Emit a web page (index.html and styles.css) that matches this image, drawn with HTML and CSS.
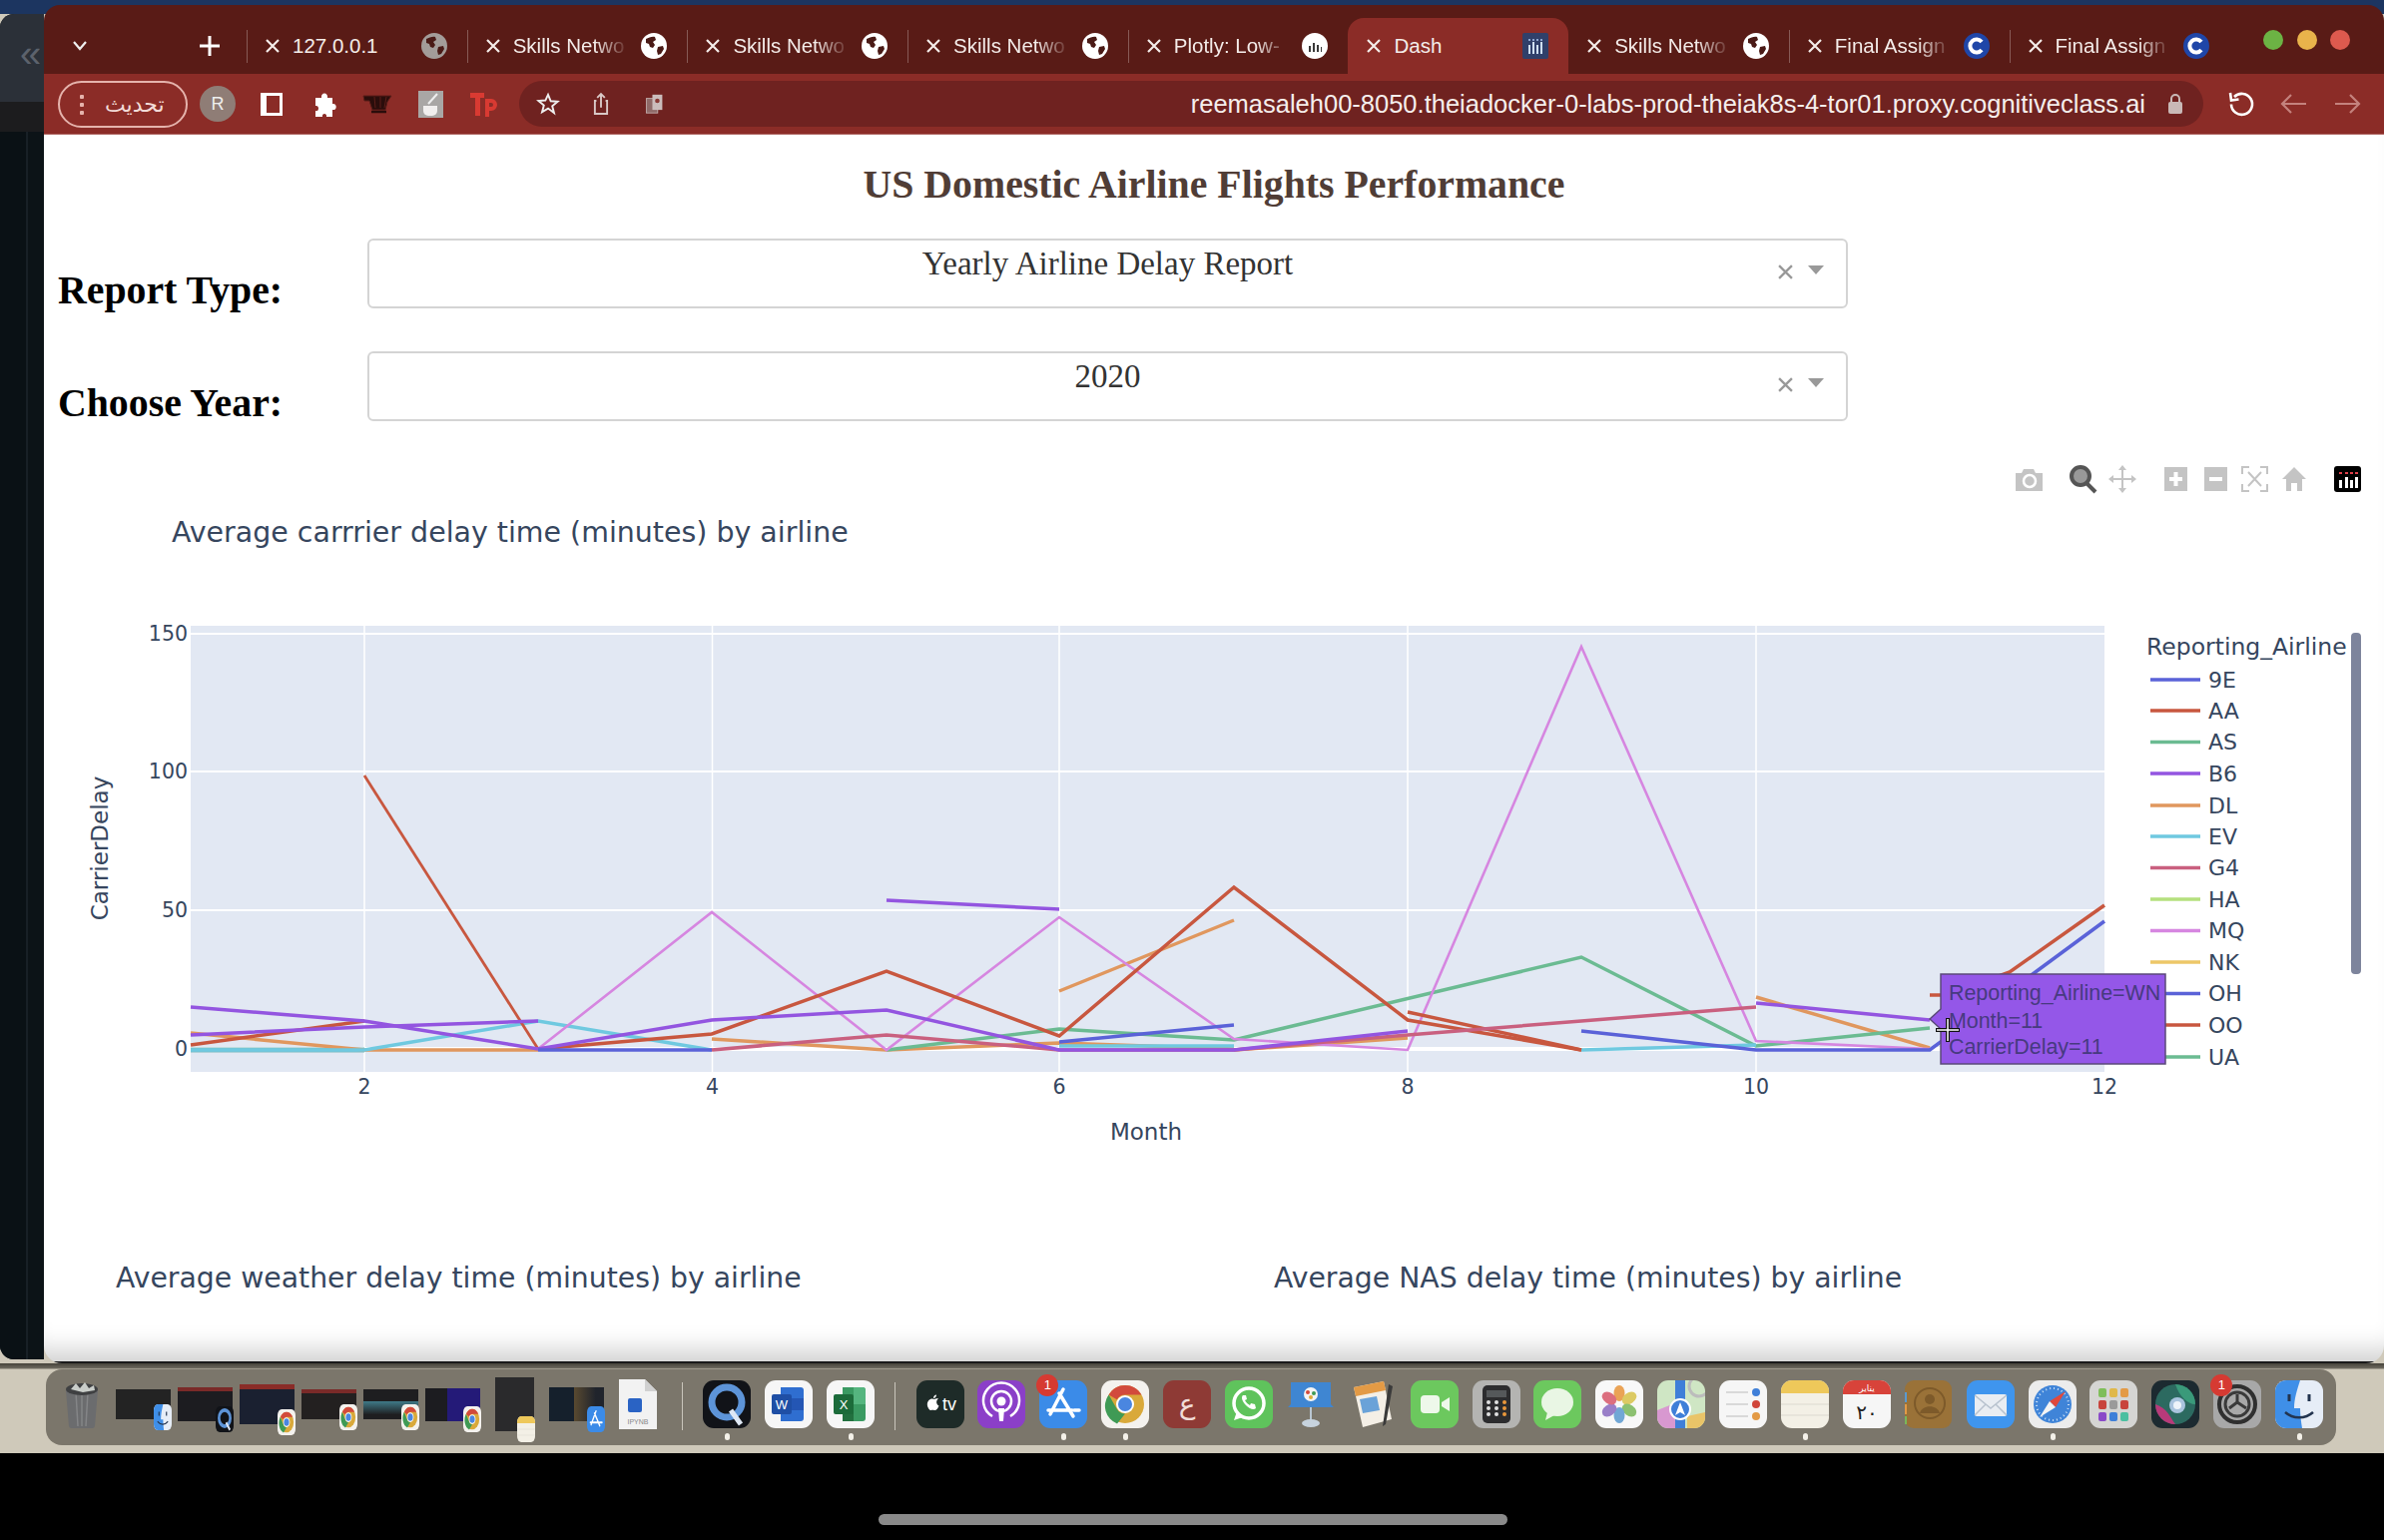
FILE: index.html
```html
<!DOCTYPE html>
<html lang="en">
<head>
    <meta charset="UTF-8">
    <title>Dash</title>
    <link rel="stylesheet" href="styles.css">
</head>
<body>
    <!-- shared icons -->
    <svg class="defs" width="0" height="0">
        <symbol id="i-x" viewBox="0 0 14 14"><path d="M1 1l12 12M13 1L1 13" stroke="currentColor" stroke-width="2.200" fill="none"/></symbol>
        <symbol id="i-globe" viewBox="0 0 28 28"><circle cx="14" cy="14" r="13" fill="currentColor"/><path d="M6 7c3-1 6-3 9-2l1 3-3 2 2 3-2 3-3-1-1-3-3-1zM18 15l5-1 1 3-3 5-3 1-1-4z" fill="#4a1a16"/></symbol>
        <symbol id="i-plotly" viewBox="0 0 28 28"><circle cx="14" cy="14" r="13" fill="#fff"/><path d="M8 14h2v6H8zM12 11h2v9h-2zM16 13h2v7h-2zM20 15h1v5h-1z" fill="#3a3a3a"/></symbol>
        <symbol id="i-dash" viewBox="0 0 28 28"><rect x="1" y="1" width="26" height="26" rx="2" fill="#30406a"/><path d="M7 13h2v9H7zM11 10h2v12h-2zM15 13h2v9h-2zM19 10h2v12h-2z" fill="#cfe0f5"/><path d="M7 7h2v2H7zM11 7h2v2h-2zM15 7h2v2h-2zM19 7h2v2h-2z" fill="#8fa6d0"/></symbol>
        <symbol id="i-c" viewBox="0 0 28 28"><circle cx="14" cy="14" r="13" fill="#1f46a8"/><path d="M19 10a6.500 6.500 0 1 0 0 8" stroke="#fff" stroke-width="4" fill="none"/></symbol>
        <symbol id="i-chrome" viewBox="0 0 48 48" preserveAspectRatio="none"><rect x="0" y="0" width="48" height="48" rx="11" fill="#f4f2ee"/><circle cx="24" cy="24" r="19" fill="#d9a93a"/><path d="M24 5a19 19 0 0 1 16.500 9.500H24a9.500 9.500 0 0 0-8.200 4.700L7.600 14.500A19 19 0 0 1 24 5z" fill="#d24a3c"/><path d="M7.600 14.500l8.200 14.200a9.500 9.500 0 0 0 8.200 4.800l-8 10A19 19 0 0 1 7.600 14.500z" fill="#3f9a55"/><circle cx="24" cy="24" r="9" fill="#fff"/><circle cx="24" cy="24" r="7" fill="#4a86e0"/></symbol>
        <symbol id="i-finder" viewBox="0 0 48 48" preserveAspectRatio="none"><rect width="48" height="48" rx="11" fill="#e6edf7"/><path d="M11 0h14c-3 9-6 19-6 28h6c0 7 1 14 2 20H11A11 11 0 0 1 0 37V11A11 11 0 0 1 11 0z" fill="#3f8fe8"/><path d="M14 14v7M34 14v7" stroke="#22344f" stroke-width="3"/><path d="M10 32c8 7 20 7 28 0" stroke="#22344f" stroke-width="2.500" fill="none"/></symbol>
        <symbol id="i-appstore" viewBox="0 0 48 48" preserveAspectRatio="none"><rect width="48" height="48" rx="11" fill="#3b8be8"/><path d="M24 9l-13 25M20 13l14 23M9 30h24M35 30h5" stroke="#fff" stroke-width="3.500" fill="none" stroke-linecap="round"/></symbol>
        <symbol id="i-notes" viewBox="0 0 48 48" preserveAspectRatio="none"><rect width="48" height="48" rx="11" fill="#f3f0e6"/><path d="M0 13V11A11 11 0 0 1 11 0h26a11 11 0 0 1 11 11v2z" fill="#eec85a"/><path d="M0 24h48M0 35h48" stroke="#dcd9d0" stroke-width="1"/></symbol>
        <symbol id="i-quicktime" viewBox="0 0 48 48" preserveAspectRatio="none"><rect width="48" height="48" rx="11" fill="#111318"/><circle cx="24" cy="22" r="15" fill="none" stroke="#5d94d8" stroke-width="7"/><path d="M28 30l10 14" stroke="#dfe8f5" stroke-width="5"/></symbol>
    </svg>

    <div class="desktop">
        <div class="back-window">
            <div class="back-top">&laquo;</div>
            <div class="back-bar"></div>
            <div class="back-body"></div>
        </div>

        <div class="browser">
            <div class="tabstrip">
                <div class="strip-controls">
                    <svg class="chevron" width="18" height="12" viewBox="0 0 18 12"><path d="M3 2l6 7 6-7" stroke="#eee" stroke-width="2.200" fill="none"/></svg>
                    <svg class="new-tab" width="24" height="24" viewBox="0 0 24 24"><path d="M12 2v20M2 12h20" stroke="#fff" stroke-width="3"/></svg>
                </div>
                <div class="tab"><svg class="tab-x"><use href="#i-x"/></svg><span class="tab-label plain">127.0.0.1</span><svg class="fav dim"><use href="#i-globe"/></svg></div>
                <div class="tab"><svg class="tab-x"><use href="#i-x"/></svg><span class="tab-label">Skills Netwo</span><svg class="fav"><use href="#i-globe"/></svg></div>
                <div class="tab"><svg class="tab-x"><use href="#i-x"/></svg><span class="tab-label">Skills Netwo</span><svg class="fav"><use href="#i-globe"/></svg></div>
                <div class="tab"><svg class="tab-x"><use href="#i-x"/></svg><span class="tab-label">Skills Netwo</span><svg class="fav"><use href="#i-globe"/></svg></div>
                <div class="tab"><svg class="tab-x"><use href="#i-x"/></svg><span class="tab-label">Plotly: Low-</span><svg class="fav"><use href="#i-plotly"/></svg></div>
                <div class="tab active"><svg class="tab-x"><use href="#i-x"/></svg><span class="tab-label plain">Dash</span><svg class="fav"><use href="#i-dash"/></svg></div>
                <div class="tab"><svg class="tab-x"><use href="#i-x"/></svg><span class="tab-label">Skills Netwo</span><svg class="fav"><use href="#i-globe"/></svg></div>
                <div class="tab"><svg class="tab-x"><use href="#i-x"/></svg><span class="tab-label">Final Assign</span><svg class="fav"><use href="#i-c"/></svg></div>
                <div class="tab"><svg class="tab-x"><use href="#i-x"/></svg><span class="tab-label">Final Assign</span><svg class="fav"><use href="#i-c"/></svg></div>
                <div class="traffic">
                    <span class="light green"></span>
                    <span class="light yellow"></span>
                    <span class="light red"></span>
                </div>
            </div>

            <div class="toolbar">
                <div class="update-pill"><span class="pill-dots"></span><span class="pill-text">تحديث</span></div>
                <div class="avatar">R</div>
                <svg class="tool-icon" viewBox="0 0 34 34"><rect x="6" y="6" width="22" height="23" fill="#fff"/><rect x="12" y="9" width="13" height="17" fill="#8a2b26"/></svg>
                <svg class="tool-icon" viewBox="0 0 34 34"><path d="M8 11h6c-1-6 7-6 6 0h5v6c5-1 5 7 0 6v7h-6c1-4-5-4-4 0H8v-6c4 1 4-6 0-5z" fill="#fff"/></svg>
                <svg class="tool-icon" viewBox="0 0 34 34"><path d="M3 9h28l-4 6-2 8H12L9 14H4zM14 10l1 11M20 10v11M26 10l-2 11" fill="#2a0d0b" stroke="#5a1d18" stroke-width="1"/><path d="M11 25h15" stroke="#2a0d0b" stroke-width="2.500"/></svg>
                <svg class="tool-icon" viewBox="0 0 34 34"><rect x="5" y="4" width="25" height="27" fill="#a9a7a5"/><path d="M10 19h14v5a5 5 0 0 1-5 5h-4a5 5 0 0 1-5-5z" fill="#f1efee"/><path d="M15 17l9-10" stroke="#eee" stroke-width="2"/></svg>
                <svg class="tool-icon" viewBox="0 0 34 34"><path d="M4 6h14v5h-4v18H9V11H4zM19 12h6a6 6 0 0 1 0 12h-2v6h-4zM23 16v4h2a2 2 0 0 0 0-4z" fill="#d93a32"/></svg>
                <div class="omnibox">
                    <svg class="tool-icon" viewBox="0 0 34 34"><path d="M17 5l3.500 8.500 9 .7-7 5.800 2.300 8.800L17 23l-7.800 4.800 2.300-8.800-7-5.800 9-.7z" fill="none" stroke="#eee" stroke-width="2.500"/></svg>
                    <svg class="tool-icon" viewBox="0 0 34 34"><path d="M11 13H9v17h16V13h-2M17 22V5M12 9l5-5 5 5" fill="none" stroke="#d9c8c6" stroke-width="2.500"/></svg>
                    <svg class="tool-icon" viewBox="0 0 34 34"><rect x="7" y="10" width="15" height="19" fill="#8f6a68" stroke="#cbbcbb"/><rect x="15" y="5" width="13" height="20" fill="#cbbcbb"/><circle cx="21.500" cy="13" r="3" fill="#8a3a36"/></svg>
                    <span class="url">reemasaleh00-8050.theiadocker-0-labs-prod-theiak8s-4-tor01.proxy.cognitiveclass.ai</span>
                    <svg class="lock" width="16" height="22" viewBox="0 0 16 22"><rect x="1" y="9" width="14" height="12" rx="2" fill="#c9b9b7"/><path d="M4 9V6a4 4 0 0 1 8 0v3" stroke="#c9b9b7" stroke-width="2" fill="none"/></svg>
                </div>
                <svg class="tool-icon reload" viewBox="0 0 34 34"><path d="M10 10a10.500 10.500 0 1 1-3 7.500" fill="none" stroke="#fff" stroke-width="2.600"/><path d="M6 6l1 7.500 7.500-1" fill="none" stroke="#fff" stroke-width="2.600"/></svg>
                <svg class="tool-icon" viewBox="0 0 34 34"><path d="M29 17H6M14 8l-9 9 9 9" fill="none" stroke="#c4827d" stroke-width="2.200"/></svg>
                <svg class="tool-icon" viewBox="0 0 34 34"><path d="M5 17h23M20 8l9 9-9 9" fill="none" stroke="#c4827d" stroke-width="2.200"/></svg>
            </div>

            <div class="page">
                <h1 class="page-title">US Domestic Airline Flights Performance</h1>

                <div class="control-row">
                    <label class="control-label">Report Type:</label>
                    <div class="dropdown">
                        <span class="dropdown-value">Yearly Airline Delay Report</span>
                        <svg class="dropdown-clear"><use href="#i-x"/></svg>
                        <span class="dropdown-arrow"></span>
                    </div>
                </div>
                <div class="control-row">
                    <label class="control-label">Choose Year:</label>
                    <div class="dropdown">
                        <span class="dropdown-value">2020</span>
                        <svg class="dropdown-clear"><use href="#i-x"/></svg>
                        <span class="dropdown-arrow"></span>
                    </div>
                </div>

                <!-- viewBox uses screen coordinates so points read straight off the plot -->
                <svg class="chart" viewBox="44 450 2344 760" width="2344" height="760">
                    <g class="modebar">
                        <path class="mb-light" d="M2019 474h6l2-4h10l2 4h7v18h-27z"/>
                        <circle cx="2033" cy="482" r="6" fill="none" stroke="#fff" stroke-width="2.500"/>
                        <circle cx="2084" cy="477" r="9" fill="#999" stroke="#555" stroke-width="4"/>
                        <path d="M2090 484l9 9" stroke="#555" stroke-width="4"/>
                        <path class="mb-line" d="M2126 468v24M2114 480h24"/>
                        <path class="mb-light" d="M2126 466l4 5h-8zM2126 494l4-5h-8zM2112 480l5-4v8zM2140 480l-5-4v8z"/>
                        <rect class="mb-light" x="2168" y="468" width="23" height="24"/>
                        <path d="M2179.500 473v14M2173 480h13" stroke="#fff" stroke-width="4"/>
                        <rect class="mb-light" x="2208" y="468" width="23" height="24"/>
                        <path d="M2213 480h13" stroke="#fff" stroke-width="4"/>
                        <path class="mb-line" d="M2246 475v-7h7M2264 468h7v7M2271 485v7h-7M2253 492h-7v-7M2252 473l13 14M2265 473l-13 14"/>
                        <path class="mb-light" d="M2298 468l12 12h-4v12h-5v-8h-6v8h-5v-12h-4z"/>
                        <rect x="2338" y="467" width="27" height="26" rx="3" fill="#000"/>
                        <path d="M2343 481h3v8h-3zM2349 478h3v11h-3zM2354 481h3v8h-3zM2359 478h3v11h-3z" fill="#fff"/>
                        <path d="M2343 473h3v2h-3zM2349 473h3v2h-3zM2354 473h3v2h-3zM2359 473h3v2h-3z" fill="#e0404a"/>
                    </g>

                    <text class="chart-title" x="172" y="543">Average carrrier delay time (minutes) by airline</text>

                    <rect class="plot-bg" x="191" y="627" width="1917" height="447"/>
                    <g class="grid">
                        <path d="M365 627v447M713.500 627v447M1061 627v447M1410 627v447M1759 627v447"/>
                        <path class="grid-h" d="M191 635h1917M191 773h1917M191 912h1917"/>
                        <path class="grid-zero" d="M191 1051h1917"/>
                    </g>

                    <g class="ticks">
                        <text class="tick-y" x="188" y="642">150</text>
                        <text class="tick-y" x="188" y="780">100</text>
                        <text class="tick-y" x="188" y="919">50</text>
                        <text class="tick-y" x="188" y="1058">0</text>
                        <text class="tick-x" x="365" y="1096">2</text>
                        <text class="tick-x" x="713.500" y="1096">4</text>
                        <text class="tick-x" x="1061" y="1096">6</text>
                        <text class="tick-x" x="1410" y="1096">8</text>
                        <text class="tick-x" x="1759" y="1096">10</text>
                        <text class="tick-x" x="2108" y="1096">12</text>
                    </g>
                    <text class="axis-title tick-x" x="1148" y="1142">Month</text>
                    <text class="axis-title tick-x" transform="translate(108 850) rotate(-90)">CarrierDelay</text>

                    <g class="lines">
                        <polyline class="s-teal" points="191,1052 365,1052"/>
                        <polyline class="s-dl" points="191,1035 365,1052 539,1052"/>
                        <polyline class="s-dl" points="713,1041 888,1052 1061,1045 1236,1051"/>
                        <polyline class="s-dl" points="1061,993 1236,922"/>
                        <polyline class="s-dl" points="1236,1052 1410,1040"/>
                        <polyline class="s-dl" points="1759,999 1933,1050"/>
                        <polyline class="s-as" points="888,1052 1061,1031 1236,1042 1584,959 1759,1048 1933,1030"/>
                        <polyline class="s-ev" points="191,1052 365,1052 539,1023 713,1052"/>
                        <polyline class="s-ev" points="1061,1048 1236,1048"/>
                        <polyline class="s-ev" points="1584,1052 1759,1047"/>
                        <polyline class="s-mq" points="539,1051 713,914 888,1052 1061,919 1236,1041 1410,1052 1584,648 1759,1043 1933,1051"/>
                        <polyline class="s-aa" points="191,1047 365,1023"/>
                        <polyline class="s-aa thin" points="365,777 539,1051"/>
                        <polyline class="s-aa" points="539,1051 713,1036 888,973 1061,1038 1236,889 1410,1022 1584,1052"/>
                        <polyline class="s-aa" points="1410,1014 1584,1052"/>
                        <polyline class="s-aa" points="1933,997 1950,997 2013,974 2108,907"/>
                        <polyline class="s-g4" points="713,1052 888,1037 1061,1052 1236,1052 1410,1037 1584,1023 1759,1009"/>
                        <polyline class="s-b6" points="191,1009 365,1023 539,1051 713,1022 888,1012 1061,1052 1236,1052 1410,1033"/>
                        <polyline class="s-b6" points="191,1037 365,1029 539,1023"/>
                        <polyline class="s-b6" points="888,902 1061,911"/>
                        <polyline class="s-b6" points="1759,1005 1933,1022"/>
                        <polyline class="s-9e" points="539,1052 713,1052"/>
                        <polyline class="s-9e" points="1061,1044 1236,1027"/>
                        <polyline class="s-9e" points="1584,1033 1759,1052 1933,1052 2108,923"/>
                    </g>

                    <text class="legend-title" x="2150" y="656">Reporting_Airline</text>
                    <g class="legend">
                        <path class="s-9e" d="M2154 681h50"/><text x="2212" y="689">9E</text>
                        <path class="s-aa" d="M2154 712h50"/><text x="2212" y="720">AA</text>
                        <path class="s-as" d="M2154 743.500h50"/><text x="2212" y="751">AS</text>
                        <path class="s-b6" d="M2154 775h50"/><text x="2212" y="783">B6</text>
                        <path class="s-dl" d="M2154 807h50"/><text x="2212" y="815">DL</text>
                        <path class="s-ev" d="M2154 838h50"/><text x="2212" y="846">EV</text>
                        <path class="s-g4" d="M2154 869.500h50"/><text x="2212" y="877">G4</text>
                        <path class="s-ha" d="M2154 901h50"/><text x="2212" y="909">HA</text>
                        <path class="s-mq" d="M2154 932.500h50"/><text x="2212" y="940">MQ</text>
                        <path class="s-nk" d="M2154 964h50"/><text x="2212" y="972">NK</text>
                        <path class="s-9e" d="M2154 995.500h50"/><text x="2212" y="1003">OH</text>
                        <path class="s-aa" d="M2154 1027h50"/><text x="2212" y="1035">OO</text>
                        <path class="s-as" d="M2154 1059h50"/><text x="2212" y="1067">UA</text>
                    </g>
                    <rect class="legend-scroll" x="2355" y="634" width="10" height="342" rx="4"/>

                    <g class="hover">
                        <polygon points="1933,1021 1944,1011 1944,976 2169,976 2169,1066 1944,1066 1944,1031"/>
                        <text x="1952" y="1002">Reporting_Airline=WN</text>
                        <text x="1952" y="1030">Month=11</text>
                        <text x="1952" y="1056">CarrierDelay=11</text>
                    </g>
                    <path d="M1951 1020v24M1939 1032h24" stroke="#111" stroke-width="4"/>
                    <path d="M1951 1021v22M1940 1032h22" stroke="#fff" stroke-width="1.500"/>
                </svg>

                <div class="chart-row">
                    <div class="chart-heading">Average weather delay time (minutes) by airline</div>
                    <div class="chart-heading">Average NAS delay time (minutes) by airline</div>
                </div>
            </div>
        </div>
    </div>

    <div class="dock-area">
    <div class="dock">
        <div class="dock-item">
            <svg class="dock-icon" viewBox="0 0 48 48"><path d="M8 10h32l-3 36a3 3 0 0 1-3 2H14a3 3 0 0 1-3-2z" fill="#6b6c6e"/><path d="M18 12l2 34M30 12l-2 34M24 12v34" stroke="#848587" stroke-width="1.500"/><ellipse cx="24" cy="9" rx="16" ry="6" fill="#3f4042"/><path d="M13 9l5-6 4 5 5-6 4 6 5-3 1 5-12 2z" fill="#c9cdc9"/></svg>
        </div>
        <div class="dock-item"><div class="thumb t1"><svg class="thumb-badge"><use href="#i-finder"/></svg></div></div>
        <div class="dock-item"><div class="thumb t2"><svg class="thumb-badge"><use href="#i-quicktime"/></svg></div></div>
        <div class="dock-item"><div class="thumb t3"><svg class="thumb-badge"><use href="#i-chrome"/></svg></div></div>
        <div class="dock-item"><div class="thumb t4"><svg class="thumb-badge"><use href="#i-chrome"/></svg></div></div>
        <div class="dock-item"><div class="thumb t5"><svg class="thumb-badge"><use href="#i-chrome"/></svg></div></div>
        <div class="dock-item"><div class="thumb t6"><svg class="thumb-badge"><use href="#i-chrome"/></svg></div></div>
        <div class="dock-item"><div class="thumb t7"><svg class="thumb-badge"><use href="#i-notes"/></svg></div></div>
        <div class="dock-item"><div class="thumb t8"><svg class="thumb-badge"><use href="#i-appstore"/></svg></div></div>
        <div class="dock-item">
            <svg class="dock-icon tall" viewBox="0 0 38 50"><path d="M0 0h26l12 12v38H0z" fill="#f2f2f2"/><path d="M26 0v12h12z" fill="#d0d0d0"/><rect x="9" y="19" width="14" height="14" rx="2" fill="#2a63c4"/><text x="19" y="45" text-anchor="middle" class="doc-text">IPYNB</text></svg>
        </div>
        <div class="dock-sep"></div>
        <div class="dock-item running"><svg class="dock-icon"><use href="#i-quicktime"/></svg></div>
        <div class="dock-item">
            <svg class="dock-icon" viewBox="0 0 48 48"><rect width="48" height="48" rx="11" fill="#f6f6f6"/><path d="M16 7h20a3 3 0 0 1 3 3v28a3 3 0 0 1-3 3H16z" fill="#2f6ed0"/><path d="M16 18h23v12H16z" fill="#2456b4"/><rect x="7" y="14" width="20" height="20" rx="2" fill="#1f4fa5"/><text x="17" y="29" text-anchor="middle" class="app-letter">W</text></svg>
        </div>
        <div class="dock-item running">
            <svg class="dock-icon" viewBox="0 0 48 48"><rect width="48" height="48" rx="11" fill="#f6f6f6"/><path d="M16 7h20a3 3 0 0 1 3 3v28a3 3 0 0 1-3 3H16z" fill="#3a9a62"/><path d="M27 7h9a3 3 0 0 1 3 3v14H27z" fill="#55b57f"/><path d="M16 24h11v17H16z" fill="#22703f"/><rect x="7" y="14" width="20" height="20" rx="2" fill="#1c6b3a"/><text x="17" y="29" text-anchor="middle" class="app-letter">X</text></svg>
        </div>
        <div class="dock-sep"></div>
        <div class="dock-item">
            <svg class="dock-icon" viewBox="0 0 48 48"><rect width="48" height="48" rx="11" fill="#1e2b28"/><path d="M14 19c2-1 3 0 4 0s2-1 4-.500c-3 2-2 6 .500 7-1 3-3 5-4.500 4.500s-2-.500-3.500 0C12 30 8 22 14 19zM17 18c0-2 1.500-3.500 3-3.500 0 2-1.500 3.500-3 3.500z" fill="#fff"/><text x="33" y="30" text-anchor="middle" class="tv-text">tv</text></svg>
        </div>
        <div class="dock-item">
            <svg class="dock-icon" viewBox="0 0 48 48"><rect width="48" height="48" rx="11" fill="#8b3fc8"/><circle cx="24" cy="21" r="4.500" fill="#fff"/><path d="M21 28h6l-1 13h-4z" fill="#fff"/><circle cx="24" cy="21" r="10" fill="none" stroke="#fff" stroke-width="2.500"/><path d="M15 36a18 18 0 1 1 18 0" fill="none" stroke="#fff" stroke-width="2.500"/></svg>
        </div>
        <div class="dock-item running"><svg class="dock-icon"><use href="#i-appstore"/></svg><span class="badge">1</span></div>
        <div class="dock-item running"><svg class="dock-icon"><use href="#i-chrome"/></svg></div>
        <div class="dock-item">
            <svg class="dock-icon" viewBox="0 0 48 48"><rect width="48" height="48" rx="11" fill="#8e3a35"/><text x="24" y="33" text-anchor="middle" class="arabic-letter">ع</text></svg>
        </div>
        <div class="dock-item">
            <svg class="dock-icon" viewBox="0 0 48 48"><rect width="48" height="48" rx="11" fill="#5fc35c"/><circle cx="24" cy="23" r="15" fill="none" stroke="#fff" stroke-width="3.500"/><path d="M9 40l3-9 6 6z" fill="#fff"/><path d="M18 15c-2 2-1 6 3 10s8 5 10 3l-1-4-4-1-1 2c-2-1-4-3-5-5l2-1-1-4z" fill="#fff"/></svg>
        </div>
        <div class="dock-item">
            <svg class="dock-icon" viewBox="0 0 48 48"><path d="M23 22h2v20h-2z" fill="#b9c6d2"/><ellipse cx="24" cy="43" rx="9" ry="4" fill="#c7d3de"/><path d="M4 2h40v22l3 3H1l3-3z" fill="#3f86d2"/><circle cx="24" cy="14" r="7" fill="#f4f4f4"/><circle cx="21" cy="12" r="2" fill="#d24a3c"/><circle cx="27" cy="13" r="2" fill="#3f9a55"/><circle cx="24" cy="17" r="2" fill="#e0a93a"/></svg>
        </div>
        <div class="dock-item">
            <svg class="dock-icon" viewBox="0 0 48 48"><path d="M5 7l30-6 8 38-29 8z" fill="#f4efe6"/><path d="M5 7l30-6 2 9-30 6z" fill="#e39a45"/><path d="M11 19l17-3 3 14-17 3z" fill="#6aa2d8"/><path d="M40 4l4 2-7 38-3 2z" fill="#3a3a3a"/></svg>
        </div>
        <div class="dock-item">
            <svg class="dock-icon" viewBox="0 0 48 48"><rect width="48" height="48" rx="11" fill="#6cc85e"/><rect x="10" y="15" width="19" height="18" rx="4" fill="#eef8ea"/><path d="M31 22l8-5v14l-8-5z" fill="#eef8ea"/></svg>
        </div>
        <div class="dock-item">
            <svg class="dock-icon" viewBox="0 0 48 48"><rect width="48" height="48" rx="11" fill="#b4b4b2"/><rect x="10" y="5" width="28" height="38" rx="5" fill="#2c2c2e"/><path d="M14 10h20v7H14z" fill="#55585a"/><g fill="#e0e0e0"><circle cx="16" cy="22" r="2"/><circle cx="24" cy="22" r="2"/><circle cx="16" cy="28" r="2"/><circle cx="24" cy="28" r="2"/><circle cx="16" cy="34" r="2"/><circle cx="24" cy="34" r="2"/></g><g fill="#e8973a"><circle cx="32" cy="22" r="2"/><circle cx="32" cy="28" r="2"/><circle cx="32" cy="34" r="2"/></g></svg>
        </div>
        <div class="dock-item">
            <svg class="dock-icon" viewBox="0 0 48 48"><rect width="48" height="48" rx="11" fill="#6cc85e"/><ellipse cx="24" cy="22" rx="16" ry="14" fill="#e9f6e4"/><path d="M14 32l-2 8 9-5z" fill="#e9f6e4"/></svg>
        </div>
        <div class="dock-item">
            <svg class="dock-icon" viewBox="0 0 48 48"><rect width="48" height="48" rx="11" fill="#f8f8f8"/><g opacity=".85"><ellipse cx="24" cy="13" rx="5.500" ry="8" fill="#e8953a"/><ellipse cx="34" cy="18" rx="5.500" ry="8" transform="rotate(55 34 18)" fill="#d8c24a"/><ellipse cx="34" cy="30" rx="5.500" ry="8" transform="rotate(125 34 30)" fill="#7ab85a"/><ellipse cx="24" cy="35" rx="5.500" ry="8" fill="#5a9ad0"/><ellipse cx="14" cy="30" rx="5.500" ry="8" transform="rotate(55 14 30)" fill="#8a6ac0"/><ellipse cx="14" cy="18" rx="5.500" ry="8" transform="rotate(125 14 18)" fill="#d8586a"/></g></svg>
        </div>
        <div class="dock-item">
            <svg class="dock-icon" viewBox="0 0 48 48"><rect width="48" height="48" rx="11" fill="#cfe6c4"/><path d="M0 30l20-8v26H11A11 11 0 0 1 0 37z" fill="#d898d0"/><path d="M30 36l18-4v5a11 11 0 0 1-11 11h-7z" fill="#e9c468"/><path d="M18 0h10v48H18z" fill="#3f7fd8"/><circle cx="23" cy="29" r="10" fill="#3f7fd8" stroke="#fff" stroke-width="2"/><path d="M23 22l-5 13 5-3 5 3z" fill="#fff"/><circle cx="42" cy="6" r="10" fill="none" stroke="#bcbcbc" stroke-width="3"/></svg>
        </div>
        <div class="dock-item">
            <svg class="dock-icon" viewBox="0 0 48 48"><rect width="48" height="48" rx="11" fill="#f6f6f6"/><path d="M7 12h22M7 24h22M7 36h22" stroke="#cfcfcf" stroke-width="1.500"/><circle cx="37" cy="12" r="4" fill="#3f7fd8"/><circle cx="37" cy="24" r="4" fill="#d0453a"/><circle cx="37" cy="36" r="4" fill="#e39a45"/></svg>
        </div>
        <div class="dock-item running"><svg class="dock-icon"><use href="#i-notes"/></svg></div>
        <div class="dock-item">
            <svg class="dock-icon" viewBox="0 0 48 48"><rect width="48" height="48" rx="11" fill="#f6f6f6"/><path d="M0 14V11A11 11 0 0 1 11 0h26a11 11 0 0 1 11 11v3z" fill="#d8433a"/><text x="24" y="11" text-anchor="middle" class="cal-month">يناير</text><text x="24" y="39" text-anchor="middle" class="cal-day">٢٠</text></svg>
        </div>
        <div class="dock-item">
            <svg class="dock-icon" viewBox="0 0 48 48"><rect x="0" y="0" width="47" height="48" rx="9" fill="#9a7238"/><rect x="0" y="12" width="2" height="10" fill="#5a9ad0"/><rect x="0" y="24" width="2" height="10" fill="#e39a45"/><rect x="0" y="36" width="2" height="8" fill="#7ab85a"/><circle cx="25" cy="23" r="15" fill="none" stroke="#7d5a2a" stroke-width="2"/><circle cx="25" cy="19" r="5" fill="#7d5a2a"/><path d="M15 33c2-9 18-9 20 0z" fill="#7d5a2a"/></svg>
        </div>
        <div class="dock-item">
            <svg class="dock-icon" viewBox="0 0 48 48"><rect width="48" height="48" rx="11" fill="#3f95ee"/><rect x="8" y="14" width="32" height="22" rx="2" fill="#e9edf2"/><path d="M8 15l16 13 16-13M8 35l11-11M40 35L29 24" fill="none" stroke="#b8c2ce" stroke-width="1.500"/></svg>
        </div>
        <div class="dock-item running">
            <svg class="dock-icon" viewBox="0 0 48 48"><rect width="48" height="48" rx="11" fill="#ececec"/><circle cx="24" cy="24" r="19" fill="#3f84d8"/><circle cx="24" cy="24" r="16" fill="none" stroke="#cfe2f6" stroke-width="2" stroke-dasharray="1 3"/><path d="M37 11L21 21l6 6z" fill="#e0483c"/><path d="M11 37l16-10-6-6z" fill="#f4f4f4"/></svg>
        </div>
        <div class="dock-item">
            <svg class="dock-icon" viewBox="0 0 48 48"><rect width="48" height="48" rx="11" fill="#d5d5d3"/><g><rect x="9" y="8" width="8" height="9" rx="2" fill="#7fbe5a"/><rect x="20" y="8" width="8" height="9" rx="2" fill="#e0b84a"/><rect x="31" y="8" width="8" height="9" rx="2" fill="#e39a45"/><rect x="9" y="20" width="8" height="9" rx="2" fill="#c8443c"/><rect x="20" y="20" width="8" height="9" rx="2" fill="#9a9a9a"/><rect x="31" y="20" width="8" height="9" rx="2" fill="#c8443c"/><rect x="9" y="32" width="8" height="9" rx="2" fill="#8a4ac8"/><rect x="20" y="32" width="8" height="9" rx="2" fill="#3f7fd8"/><rect x="31" y="32" width="8" height="9" rx="2" fill="#4abfa0"/></g></svg>
        </div>
        <div class="dock-item">
            <svg class="dock-icon" viewBox="0 0 48 48"><rect width="48" height="48" rx="11" fill="#1c2a30"/><circle cx="24" cy="24" r="20" fill="#2c6a60"/><path d="M4 24a20 20 0 0 0 20 20c-6-8-8-16-20-20z" fill="#b83a7a"/><path d="M24 4a20 20 0 0 1 20 20c-8 0-16-8-20-20z" fill="#3a9a7a"/><circle cx="26" cy="25" r="8" fill="#a9c4de"/><circle cx="26" cy="25" r="4" fill="#eef4fa"/></svg>
        </div>
        <div class="dock-item">
            <svg class="dock-icon" viewBox="0 0 48 48"><rect width="48" height="48" rx="11" fill="#a8a8a8"/><circle cx="24" cy="24" r="18" fill="none" stroke="#2f2f2f" stroke-width="4"/><circle cx="24" cy="24" r="12" fill="none" stroke="#3a3a3a" stroke-width="3"/><path d="M24 14v8l-8 6M24 22l9 6" stroke="#3a3a3a" stroke-width="3" fill="none"/></svg>
            <span class="badge">1</span>
        </div>
        <div class="dock-item running"><svg class="dock-icon"><use href="#i-finder"/></svg></div>
    </div>
    </div>

    <div class="home-area"><span class="home-pill"></span></div>
</body>
</html>
```

FILE: styles.css
```css
* {
    box-sizing: border-box;
}

body {
    margin: 0;
    width: 2388px;
    height: 1543px;
    overflow: hidden;
    background-color: #000;
    font-family: "Liberation Sans", Arial, sans-serif;
}

.defs {
    display: block;
    height: 0;
}

/* desktop behind the windows */
.desktop {
    display: flex;
    height: 1366px;
    background: linear-gradient(to bottom, #1c3560 0, #1c3560 14px, #cfc9ba 14px);
}

.back-window {
    width: 44px;
    height: 1348px;
    margin-top: 14px;
    display: flex;
    flex-direction: column;
    background-color: #0a1115;
    border-radius: 14px 0 0 14px;
    overflow: hidden;
}

.back-top {
    height: 88px;
    padding: 18px 0 0 20px;
    background-color: #2b3038;
    color: #5c626c;
    font-size: 38px;
    line-height: 44px;
}

.back-bar {
    height: 30px;
    background-color: #1c1c1e;
}

.back-body {
    flex: 1;
    border-left: 26px solid #0a1115;
    background: linear-gradient(to right, #182026 0, #182026 2px, #0c1317 2px);
}

.browser {
    flex: 1;
    margin-top: 5px;
    display: flex;
    flex-direction: column;
    border-radius: 16px 16px 18px 18px;
    overflow: hidden;
}

/* tab strip */
.tabstrip {
    height: 69px;
    display: flex;
    align-items: flex-end;
    background-color: #591b16;
}

.strip-controls {
    width: 203px;
    height: 56px;
    display: flex;
    align-items: center;
    padding: 0 25px 0 27px;
    justify-content: space-between;
}

.tab {
    position: relative;
    width: 220.700px;
    height: 56px;
    display: flex;
    align-items: center;
    gap: 13px;
    padding: 0 19px;
    color: #f4ece9;
    font-size: 20.500px;
}

.tab::before {
    content: "";
    position: absolute;
    left: 0;
    top: 12px;
    height: 33px;
    width: 1px;
    background-color: rgba(255, 255, 255, 0.28);
}

.tab.active {
    background-color: #8b2c27;
    border-radius: 16px 16px 0 0;
}

.tab.active::before,
.tab.active + .tab::before {
    display: none;
}

.tab-x {
    width: 14px;
    height: 14px;
    flex-shrink: 0;
    color: #f4ece9;
}

.tab-label {
    flex: 1;
    white-space: nowrap;
    -webkit-mask-image: linear-gradient(to right, #000 72%, rgba(0, 0, 0, 0.12) 98%);
    mask-image: linear-gradient(to right, #000 72%, rgba(0, 0, 0, 0.12) 98%);
}

.tab-label.plain {
    -webkit-mask-image: none;
    mask-image: none;
}

.fav {
    width: 28px;
    height: 28px;
    flex-shrink: 0;
    color: #fff;
}

.fav.dim {
    color: #a39c99;
}

.traffic {
    align-self: flex-start;
    display: flex;
    gap: 13.500px;
    margin: 25px 0 0 34px;
}

.light {
    width: 20px;
    height: 20px;
    border-radius: 50%;
}

.light.green { background-color: #6cb344; }
.light.yellow { background-color: #e9b34b; }
.light.red { background-color: #dd5a4e; }

/* toolbar */
.toolbar {
    height: 61px;
    display: flex;
    align-items: center;
    gap: 19px;
    padding-left: 14px;
    background-color: #8b2c27;
    border-bottom: 1px solid #b06a66;
}

.update-pill {
    width: 130px;
    height: 47px;
    margin-right: -7px;
    display: flex;
    align-items: center;
    padding-left: 20px;
    gap: 21px;
    border: 2px solid #e5b3ac;
    border-radius: 24px;
    color: #f3dcd8;
    font-family: "DejaVu Sans", sans-serif;
    font-size: 22px;
}

.pill-dots {
    width: 4px;
    height: 22px;
    background: radial-gradient(circle, #e5b3ac 2px, transparent 2.500px) 0 0 / 4px 8px;
}

.avatar {
    width: 36px;
    height: 36px;
    flex-shrink: 0;
    border-radius: 50%;
    background-color: #8f7d76;
    color: #eee;
    font-size: 18px;
    line-height: 36px;
    text-align: center;
}

.tool-icon {
    width: 34px;
    height: 34px;
    flex-shrink: 0;
}

.omnibox {
    width: 1687px;
    height: 46px;
    display: flex;
    align-items: center;
    gap: 19px;
    padding-left: 12px;
    background-color: #6f2220;
    border-radius: 23px;
}

.omnibox .tool-icon {
    padding: 4px;
}

.url {
    flex: 1;
    text-align: right;
    color: #f5eeec;
    font-size: 25.500px;
    white-space: nowrap;
}

.lock {
    margin: 0 20px 0 3px;
    flex-shrink: 0;
}

.reload {
    margin-left: 2px;
}

/* page */
.page {
    flex: 1;
    overflow: hidden;
    background-color: #fff;
    border-bottom: 2px solid #1a1a1a;
    box-shadow: inset 0 -30px 24px -18px rgba(0, 0, 0, 0.18);
    font-family: "Liberation Serif", "Times New Roman", serif;
}

.page-title {
    margin: 0;
    height: 104px;
    padding-top: 26px;
    text-align: center;
    color: #503d36;
    font-size: 39.800px;
    line-height: 48px;
    font-weight: bold;
}

.control-row {
    display: flex;
    align-items: flex-end;
    height: 70px;
    margin-bottom: 43px;
    padding-left: 14px;
}

.control-label {
    width: 310px;
    margin-bottom: -5px;
    font-weight: bold;
    font-size: 39.800px;
    line-height: 46px;
    color: #000;
}

.dropdown {
    position: relative;
    width: 1483px;
    height: 70px;
    padding-top: 3px;
    border: 2px solid #d4d4d4;
    border-radius: 6px;
    text-align: center;
}

.dropdown-value {
    color: #333;
    font-size: 33px;
    line-height: 40px;
}

.dropdown-clear {
    position: absolute;
    right: 53px;
    top: 24px;
    width: 15px;
    height: 15px;
    color: #999;
}

.dropdown-arrow {
    position: absolute;
    right: 22px;
    top: 25px;
    border-style: solid;
    border-width: 9px 8px 0;
    border-color: #999 transparent transparent;
}

.chart {
    display: block;
    margin-top: -15px;
    font-family: "DejaVu Sans", Verdana, sans-serif;
    fill: #36465e;
}

.chart-title {
    font-size: 28.450px;
}

.plot-bg {
    fill: #e2e8f3;
}

.grid path {
    stroke: #fff;
    stroke-width: 1.500;
    fill: none;
}

.grid .grid-h {
    stroke-width: 2;
}

.grid .grid-zero {
    stroke-width: 4;
}

.ticks text {
    font-size: 20.500px;
}

.tick-y {
    text-anchor: end;
}

.tick-x {
    text-anchor: middle;
}

.axis-title {
    font-size: 23px;
}

.lines polyline {
    fill: none;
    stroke-width: 3.500;
}

.lines .thin {
    stroke-width: 2.800;
}

.lines .s-mq {
    stroke-width: 2.600;
}

.s-9e { stroke: #5a62d8; }
.s-aa { stroke: #c8573f; }
.s-as { stroke: #6bbb92; }
.s-b6 { stroke: #9355e0; }
.s-dl { stroke: #e0975e; }
.s-ev { stroke: #6fc9e0; }
.s-g4 { stroke: #c9607f; }
.s-ha { stroke: #b5e07e; }
.s-mq { stroke: #d686e0; }
.s-nk { stroke: #edc768; }
.lines .s-teal { stroke: #7cb9c0; stroke-width: 5; }

.legend-title {
    font-size: 23.500px;
}

.legend text {
    font-size: 22px;
}

.legend path {
    stroke-width: 3.500;
    fill: none;
}

.legend-scroll {
    fill: #7d849c;
}

.hover polygon {
    fill: #9457e8;
    stroke: #5b4a7a;
    stroke-width: 1.500;
}

.hover text {
    fill: #473a80;
    font-family: "Liberation Sans", Arial, sans-serif;
    font-size: 21.400px;
}

.mb-light {
    fill: #c4c4c4;
}

.mb-line {
    stroke: #c4c4c4;
    stroke-width: 2;
    fill: none;
}

.chart-row {
    display: grid;
    grid-template-columns: 1160px 1fr;
    padding: 54px 0 0 72px;
    font-family: "DejaVu Sans", Verdana, sans-serif;
    color: #36465e;
    font-size: 28.300px;
}

/* dock */
.dock-area {
    height: 90px;
    padding: 6px 48px 0 46px;
    background: linear-gradient(to bottom, #45423a 0, #6e6a5f 5px, #cfc9ba 6px);
}

.dock {
    height: 76px;
    display: flex;
    padding-left: 5px;
    padding-top: 11px;
    background-color: #7b766b;
    border-radius: 16px;
}

.dock-item {
    position: relative;
    flex: 0 0 61.900px;
    height: 48px;
    display: flex;
    justify-content: center;
    align-items: center;
}

.dock-sep {
    flex: 0 0 27.500px;
    height: 48px;
    margin-top: 2px;
    background: linear-gradient(#c9c5bb, #c9c5bb) center / 1px 100% no-repeat;
}

.dock-icon {
    width: 48px;
    height: 48px;
}

.dock-icon.tall {
    width: 38px;
    height: 50px;
}

.running::after {
    content: "";
    position: absolute;
    left: 50%;
    bottom: -12px;
    width: 5px;
    height: 7px;
    margin-left: -2px;
    border-radius: 3px;
    background-color: #f3f0e8;
}

.badge {
    position: absolute;
    left: 4px;
    top: -6px;
    width: 22px;
    height: 22px;
    border-radius: 50%;
    background-color: #d63a32;
    color: #fff;
    font-size: 13px;
    line-height: 22px;
    text-align: center;
}

.thumb {
    position: relative;
    width: 55px;
    background-color: #1d1d1f;
}

.thumb-badge {
    position: absolute;
    right: -1px;
    bottom: -11px;
    width: 18px;
    height: 26px;
}

.t1 { height: 30px; background: #232323; }
.t2 { height: 34px; background: linear-gradient(#7a2a28 0, #7a2a28 4px, #1c1c20 4px); }
.t3 { height: 40px; background: linear-gradient(#8a2c28 0, #8a2c28 5px, #1a2030 5px); }
.t4 { height: 30px; background: linear-gradient(#7a2a28 0, #7a2a28 4px, #232020 4px); }
.t5 { height: 30px; background: linear-gradient(to bottom, #1e1e20 0, #1e1e20 40%, #3f7a88 40%, #1e1e20 85%); }
.t6 { height: 33px; background: linear-gradient(to right, #1c1c20 0, #1c1c20 40%, #241a78 40%); }
.t7 { height: 54px; width: 39px; background: #2a2a2c; }
.t8 { height: 34px; background: linear-gradient(to right, #15202c 0, #15202c 45%, #5a4a30 45%, #20242c 85%); }

.doc-text {
    fill: #888;
    font-family: "Liberation Sans", sans-serif;
    font-size: 7px;
}

.app-letter {
    fill: #fff;
    font-family: "Liberation Sans", sans-serif;
    font-size: 13px;
}

.tv-text {
    fill: #fff;
    font-family: "Liberation Sans", sans-serif;
    font-size: 18px;
}

.arabic-letter {
    fill: #f0dcd8;
    font-family: "DejaVu Sans", sans-serif;
    font-size: 28px;
}

.cal-month {
    fill: #fff;
    font-family: "DejaVu Sans", sans-serif;
    font-size: 9px;
}

.cal-day {
    fill: #222;
    font-family: "DejaVu Sans", sans-serif;
    font-size: 20px;
}

.home-area {
    display: flex;
    justify-content: center;
    padding: 61px 0 0 2px;
}

.home-pill {
    width: 630px;
    height: 11px;
    border-radius: 6px;
    background-color: #8a8a8a;
}
```
